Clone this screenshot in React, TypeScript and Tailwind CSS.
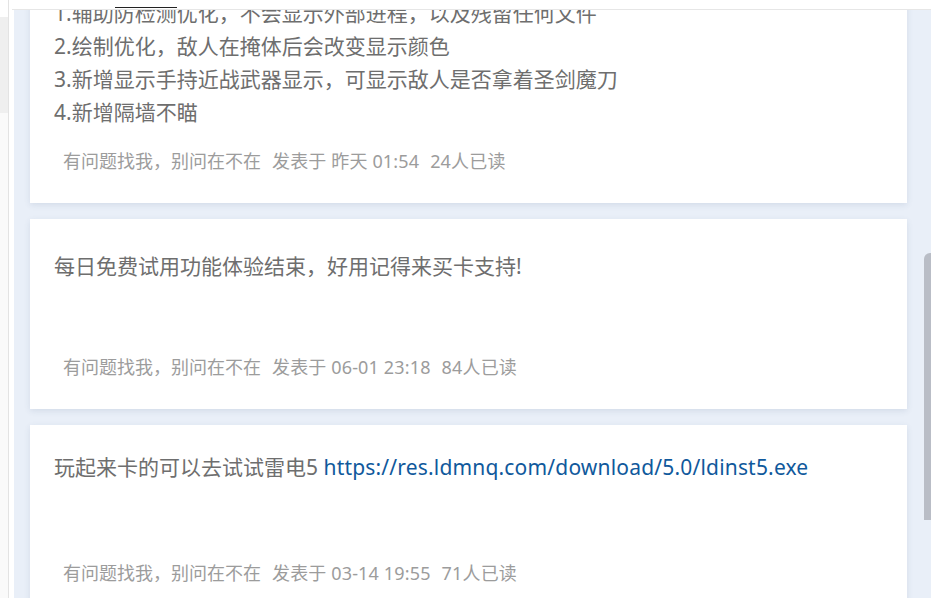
const FONT = {
  fontFamily: '"Noto Sans", "Noto Sans CJK SC", sans-serif',
};

type Post = {
  lines: React.ReactNode[];
  date: string;
  reads: number;
  lift?: boolean;
};

const posts: Post[] = [
  {
    lines: [
      "1.辅助防检测优化，不会显示外部进程，以及残留任何文件",
      "2.绘制优化，敌人在掩体后会改变显示颜色",
      "3.新增显示手持近战武器显示，可显示敌人是否拿着圣剑魔刀",
      "4.新增隔墙不瞄",
    ],
    date: "昨天 01:54",
    reads: 24,
  },
  {
    lines: ["每日免费试用功能体验结束，好用记得来买卡支持!"],
    date: "06-01 23:18",
    reads: 84,
  },
  {
    lines: [
      <>
        玩起来卡的可以去试试雷电5{" "}
        <a className="tracking-[0.18px] text-[#10599c]">
          https://res.ldmnq.com/download/5.0/ldinst5.exe
        </a>
      </>,
    ],
    date: "03-14 19:55",
    reads: 71,
    lift: true,
  },
];

function PostCard({ post, first }: { post: Post; first?: boolean }) {
  return (
    <article
      className={`bg-white px-6 pb-[30px] shadow-[0_2px_6px_rgba(60,80,120,0.12)] ${
        first ? "-mt-[34px]" : ""
      } ${post.lift ? "pt-[26px]" : "pt-[31px]"}`}
    >
      <div
        className={`text-[21px] leading-[33px] text-[#6e6e6e] ${
          post.lift ? "min-h-[90px]" : "min-h-[85px]"
        }`}
      >
        {post.lines.map((l, i) => (
          <p key={i}>{l}</p>
        ))}
      </div>
      <div className="mt-5 flex gap-[11px] pl-[9px] text-[18px] leading-6 text-[#9c9c9c]">
        <span>有问题找我，别问在不在</span>
        <span className="tracking-[0.15px]">发表于 {post.date}</span>
        <span className="tracking-[0.15px]">{post.reads}人已读</span>
      </div>
    </article>
  );
}

export default function App() {
  return (
    <div className="relative flex h-[598px] w-[931px] overflow-hidden bg-white" style={FONT}>
      {/* side list edge */}
      <div className="flex w-[9px] flex-col border-r border-[#e3e3e3]">
        <div className="h-[17px] bg-white" />
        <div className="h-[96px] bg-[#efefef]" />
        <div className="flex-1 bg-[#fafafa]" />
      </div>
      <div className="w-[5px] bg-white" />

      {/* feed */}
      <main className="flex flex-1 bg-[#e9eff8]">
        <div className="flex flex-1 flex-col gap-4 pl-4 pr-[17px]">
          {posts.map((p, i) => (
            <PostCard key={i} post={p} first={i === 0} />
          ))}
        </div>
        <div className="w-[7px]">
          <div className="mt-[253px] h-[267px] rounded-tl-[6px] bg-[#b9bdc6]" />
        </div>
      </main>

      {/* top tab strip, sits over the scrolled feed */}
      <div className="absolute left-[12px] right-0 top-0 h-[10px] border-b border-[#e6e6e6] bg-white">
        <div className="absolute left-[103px] top-[7px] h-px w-[62px] bg-[#222]" />
      </div>
    </div>
  );
}
